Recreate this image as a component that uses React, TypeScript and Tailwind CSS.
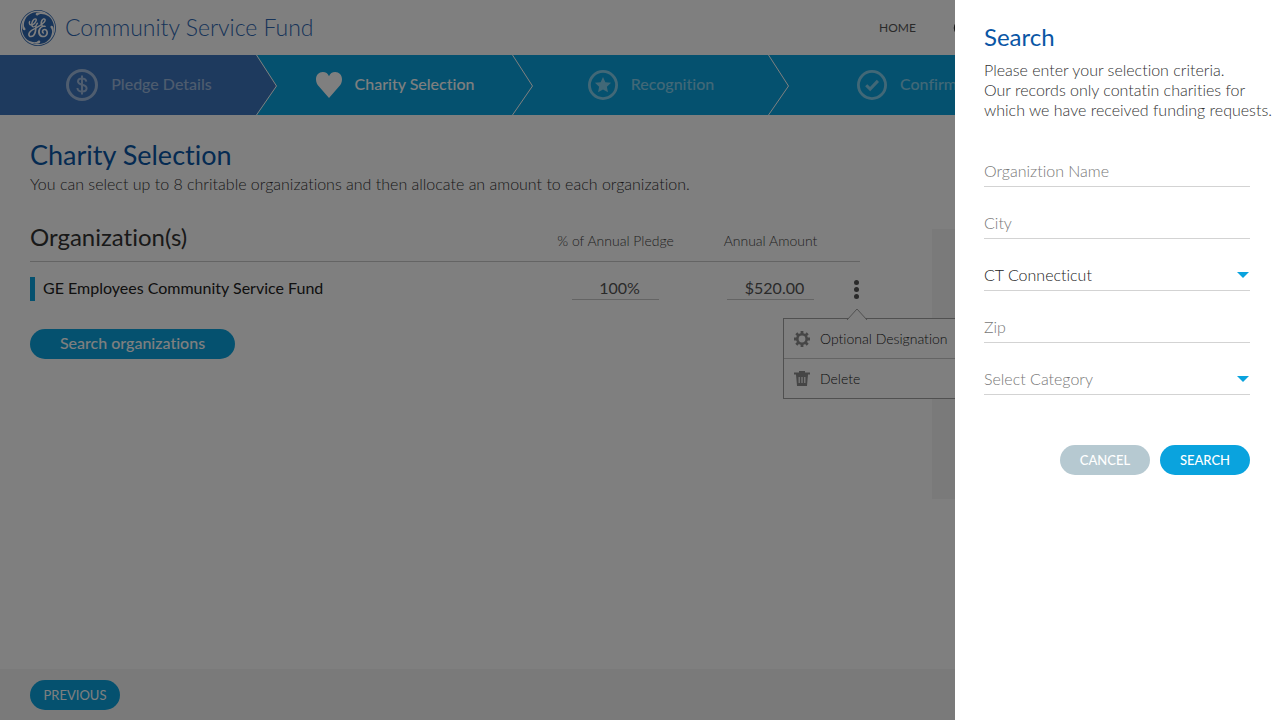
import type { ReactNode } from "react";
import { CircleHelp } from "lucide-react";
import { SiGeneralelectric } from "react-icons/si";

function Ring({ size, children }: { size: number; children: ReactNode }) {
  return (
    <svg width={size} height={size} viewBox="0 0 32 32" fill="none" aria-hidden="true">
      <circle cx="16" cy="16" r="14.5" stroke="currentColor" strokeWidth="3" />
      {children}
    </svg>
  );
}

const DollarIcon = () => (
  <Ring size={32}>
    <path
      d="M20.3 12.6C20 10.6 18.500 9.500 16 9.500C13.500 9.500 12 10.700 12 12.600C12 17 20.600 14.600 20.600 19.300C20.600 21.300 18.800 22.500 16 22.500C13.300 22.500 11.600 21.200 11.400 19M16 6.500V25.500"
      stroke="currentColor"
      strokeWidth="2"
    />
  </Ring>
);

const HeartIcon = () => (
  <svg width="26" height="26" viewBox="0 0 26 26" fill="currentColor" aria-hidden="true">
    <path d="M13 26L3 14.600C1 12.300 0 10 0 7.200C0 3 3 0 6.800 0C9.800 0 12 1.500 13 4.200C14 1.500 16.200 0 19.200 0C23 0 26 3 26 7.200C26 10 25 12.300 23 14.600Z" />
  </svg>
);

const StarIcon = () => (
  <Ring size={30}>
    <path
      d="M16 7.500L18.500 13L24.600 13.700L20.100 17.800L21.300 23.800L16 20.800L10.700 23.800L11.900 17.800L7.400 13.700L13.500 13Z"
      fill="currentColor"
    />
  </Ring>
);

const CheckIcon = () => (
  <Ring size={30}>
    <path d="M9.800 16.200L14 20.400L22.300 11.600" stroke="currentColor" strokeWidth="3.200" />
  </Ring>
);

const GearIcon = () => (
  <svg width="16" height="16" viewBox="0 0 16 16" fill="none" stroke="currentColor" aria-hidden="true">
    <circle cx="8" cy="8" r="4.700" strokeWidth="2.600" />
    <path
      d="M8 0V3M8 13V16M0 8H3M13 8H16M2.300 2.300L4.400 4.400M11.600 11.600L13.700 13.700M2.300 13.700L4.400 11.600M11.600 4.400L13.700 2.300"
      strokeWidth="2.800"
    />
  </svg>
);

const TrashIcon = () => (
  <svg width="16" height="15" viewBox="0 0 16 15" aria-hidden="true">
    <path
      fill="currentColor"
      fillRule="evenodd"
      d="M5 0H11V1.500H16V3.500H14L13 15H3L2 3.500H0V1.500H5ZM4.600 6V12H5.800V6ZM7.400 6V12H8.600V6ZM10.200 6V12H11.400V6Z"
    />
  </svg>
);

const steps = [
  { label: "Pledge Details", icon: <DollarIcon />, box: "bg-[#3c74bc]", tone: "text-white/50", arrow: true },
  { label: "Charity Selection", icon: <HeartIcon />, box: "", tone: "text-white", arrow: true },
  { label: "Recognition", icon: <StarIcon />, box: "", tone: "text-white/50", arrow: true },
  { label: "Confirm", icon: <CheckIcon />, box: "", tone: "text-white/50", arrow: false },
];

function Steps() {
  return (
    <ol className="grid h-[60px] grid-cols-5 bg-[#0aa3de]">
      {steps.map((s) => (
        <li key={s.label} className={`relative flex items-center justify-center pl-[22px] ${s.box}`}>
          <span className={`flex items-center gap-[13px] text-base font-medium whitespace-nowrap ${s.tone}`}>
            {s.icon}
            <span className="pb-0.5">{s.label}</span>
          </span>
          {s.arrow && (
            <svg
              className="absolute top-0 left-full z-10"
              width="22"
              height="60"
              viewBox="0 0 22 60"
              fill="none"
              aria-hidden="true"
            >
              <path d="M0 0L20.500 31L0 60Z" fill={s.box ? "#3c74bc" : "#0aa3de"} />
              <path d="M0.500 0L20.500 31L0.500 60" stroke="#fff" />
            </svg>
          )}
        </li>
      ))}
    </ol>
  );
}

const amountInput =
  "mx-auto block h-[22px] w-[87px] border-b border-[#c8c8c8] bg-transparent pb-0.5 pl-2 text-center text-base text-[#555] outline-none";

function RowMenu() {
  return (
    <div className="absolute top-[38px] left-[-69px] z-20 w-[190px] border border-[#a0a0a0] bg-white text-left">
      <svg className="absolute top-[-11px] left-[62px]" width="22" height="12" viewBox="0 0 22 12" aria-hidden="true">
        <path d="M1 12L11 1L21 12" fill="#fff" stroke="#a0a0a0" />
      </svg>
      <button className="flex h-10 w-full items-center gap-[10px] border-b border-[#c8c8c8] px-[10px] pt-px text-sm font-light text-[#222]">
        <span className="text-[#8c8c8c]">
          <GearIcon />
        </span>
        Optional Designation
      </button>
      <button className="flex h-[39px] w-full items-center gap-[10px] px-[10px] pt-px text-sm font-light text-[#222]">
        <span className="text-[#8c8c8c]">
          <TrashIcon />
        </span>
        Delete
      </button>
    </div>
  );
}

function Organizations() {
  return (
    <table className="w-full table-fixed">
      <thead>
        <tr className="h-[48px] border-b border-[#c8c8c8]">
          <th className="text-left text-2xl font-normal text-[#333]">Organization(s)</th>
          <th className="w-[155px] pt-2 text-sm font-light text-[#444]">% of Annual Pledge</th>
          <th className="w-[155px] pt-2 text-sm font-light text-[#444]">Annual Amount</th>
          <th className="w-3" aria-label="Actions" />
        </tr>
      </thead>
      <tbody>
        <tr className="h-[56px]">
          <td>
            <div className="flex h-6 items-center border-l-5 border-[#0aa3de] pb-0.5 pl-2 text-base text-[#222]">
              GE Employees Community Service Fund
            </div>
          </td>
          <td>
            <input aria-label="Percent of annual pledge" defaultValue="100%" className={amountInput} />
          </td>
          <td>
            <input aria-label="Annual amount" defaultValue="$520.00" className={amountInput} />
          </td>
          <td>
            <div className="relative ml-1 w-2">
              <button aria-label="More actions" className="flex w-2 flex-col items-center gap-[2px] text-[#555]">
                <span className="size-[5px] rounded-full bg-current" />
                <span className="size-[5px] rounded-full bg-current" />
                <span className="size-[5px] rounded-full bg-current" />
              </button>
              <RowMenu />
            </div>
          </td>
        </tr>
      </tbody>
    </table>
  );
}

const line =
  "block h-8 w-full appearance-none border-b border-[#d3d3d3] bg-transparent text-base font-light outline-none placeholder:text-[#777] placeholder:opacity-100";

function Caret() {
  return (
    <svg
      className="pointer-events-none absolute top-[13px] right-px text-[#0aa3de]"
      width="12"
      height="6"
      viewBox="0 0 12 6"
      aria-hidden="true"
    >
      <path d="M0 0H12L6 6Z" fill="currentColor" />
    </svg>
  );
}

function SearchDrawer() {
  return (
    <aside className="fixed inset-y-0 right-0 z-40 w-[325px] bg-white pt-[21px] pr-[30px] pl-[29px]">
      <h2 className="text-2xl leading-8 font-normal text-[#0a56a5]">Search</h2>
      <p className="mt-[7px] text-base leading-5 font-light whitespace-nowrap text-[#333]">
        Please enter your selection criteria.
        <br />
        Our records only contatin charities for
        <br />
        which we have received funding requests.
      </p>
      <form className="mt-[35px] flex flex-col gap-5" onSubmit={(e) => e.preventDefault()}>
        <input aria-label="Organization name" placeholder="Organiztion Name" className={line} />
        <input aria-label="City" placeholder="City" className={line} />
        <div className="relative">
          <select aria-label="State" className={`${line} text-[#222]`}>
            <option>CT Connecticut</option>
          </select>
          <Caret />
        </div>
        <input aria-label="Zip" placeholder="Zip" className={line} />
        <div className="relative">
          <select aria-label="Category" className={`${line} text-[#777]`}>
            <option>Select Category</option>
          </select>
          <Caret />
        </div>
        <div className="mt-[30px] flex justify-end gap-[10px] text-[13px] font-medium text-white">
          <button type="button" className="h-[30px] w-[90px] rounded-full bg-[#b6c9d1] pt-0.5">
            CANCEL
          </button>
          <button type="submit" className="h-[30px] w-[90px] rounded-full bg-[#0aa3de] pt-0.5">
            SEARCH
          </button>
        </div>
      </form>
    </aside>
  );
}

export default function App() {
  return (
    <div className="flex min-h-screen flex-col bg-white font-['Lato','Liberation_Sans',sans-serif] [font-variant-ligatures:none]">
      <header className="flex h-[55px] items-center justify-between px-5">
        <a href="#" className="flex items-center gap-[9px] text-[23px] font-light text-[#2f68b2]">
          <SiGeneralelectric size={36} />
          Community Service Fund
        </a>
        <nav className="flex w-[381px] items-center gap-[37px] text-xs text-[#555]">
          <a href="#">HOME</a>
          <a href="#" aria-label="Help" className="text-[#333]">
            <CircleHelp size={18} />
          </a>
        </nav>
      </header>
      <Steps />
      <main className="flex-1 px-[30px] pt-[22px]">
        <h1 className="text-[27px] leading-9 font-normal text-[#0a56a5]">Charity Selection</h1>
        <p className="text-base leading-[22px] font-light text-[#333]">
          You can select up to 8 chritable organizations and then allocate an amount to each organization.
        </p>
        <div className="mt-[18px] flex items-start gap-[72px]">
          <section className="min-w-0 flex-1">
            <Organizations />
            <button className="mt-3 h-[30px] w-[205px] rounded-full bg-[#0aa3de] pb-0.5 text-base font-medium text-white">
              Search organizations
            </button>
          </section>
          <div className="mt-4 h-[270px] w-[318px] bg-[#f5f5f5]" />
        </div>
      </main>
      <footer className="flex h-[51px] items-center bg-[#f5f5f5] px-[30px]">
        <button className="h-[30px] w-[90px] rounded-full bg-[#0aa3de] pt-0.5 text-[13px] text-white">PREVIOUS</button>
      </footer>
      <div className="fixed inset-0 z-30 bg-black/50" />
      <SearchDrawer />
    </div>
  );
}
